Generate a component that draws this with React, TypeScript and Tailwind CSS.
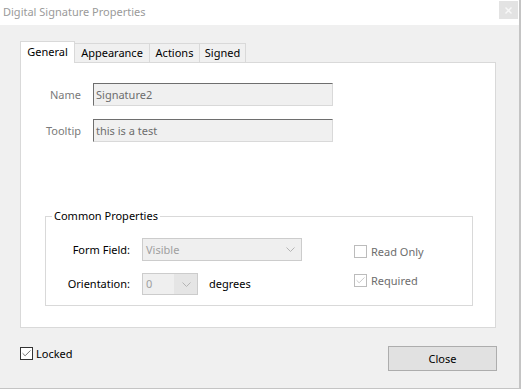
import { Check } from 'lucide-react';

const font = { fontFamily: '"Noto Sans", "Liberation Sans", sans-serif' };

function Chevron() {
  return (
    <svg width="9" height="5" viewBox="0 0 9 5" className="shrink-0">
      <path d="M0.5 0.5 L4.5 4.5 L8.5 0.5" fill="none" stroke="#b4b4b4" strokeWidth="1" />
    </svg>
  );
}

function Checkbox({ checked, disabled }: { checked?: boolean; disabled?: boolean }) {
  return (
    <span
      className={`w-[13px] h-[13px] shrink-0 flex items-center justify-center border bg-white ${
        disabled ? 'border-[#bcbcbc]' : 'border-[#333333]'
      }`}
    >
      {checked && <Check size={11} strokeWidth={1.5} className={disabled ? 'text-[#b0b0b0]' : 'text-[#333333]'} />}
    </span>
  );
}

function TextRow({ label, value }: { label: string; value: string }) {
  return (
    <div className="flex items-center">
      <span className="w-[60px] text-right text-[#7a7a7a]">{label}</span>
      <div className="ml-[12px] w-[240px] h-[23px] flex items-center pl-[2px] bg-[#f0f0f0] border border-t-[#6e6e6e] border-l-[#6e6e6e] border-r-[#d9d9d9] border-b-[#d9d9d9] text-[#6d6d6d]">
        {value}
      </div>
    </div>
  );
}

const TABS = [
  { label: 'General', w: 'w-[55px]' },
  { label: 'Appearance', w: 'w-[75px]' },
  { label: 'Actions', w: 'w-[50px]' },
  { label: 'Signed', w: 'w-[46px]' },
];

export default function App() {
  return (
    <div className="w-[523px] h-[390px] bg-white text-[11px] leading-4 text-black" style={font}>
      <div className="w-[521px] h-[389px] flex flex-col border-r-2 border-b border-[#c4c4c4]">
        <div className="h-[25px] shrink-0 bg-white flex items-center justify-between pl-[3px] pr-[1px]">
          <span className="text-[#9a9a9a] -mt-px">Digital Signature Properties</span>
          <span className="w-[19px] h-[18px] -mt-[5px] bg-[#e3e3e3] flex items-center justify-center">
            <svg width="7" height="7" viewBox="0 0 7 7">
              <path d="M0.5 0.5 L6.5 6.5 M6.5 0.5 L0.5 6.5" stroke="#f8f8f8" strokeWidth="1.4" />
            </svg>
          </span>
        </div>

        <div className="flex-1 bg-[#f0f0f0] pl-[20px] pt-[17px] flex flex-col">
          <div className="flex items-end h-[21px] relative z-10">
            {TABS.map((t, i) => (
              <div
                key={t.label}
                className={`${t.w} flex items-center justify-center ${
                  i === 0
                    ? 'h-[22px] bg-white border border-b-0 border-[#d9d9d9] pb-[2px]'
                    : 'h-[19px] border-t border-r border-[#d9d9d9] mb-[1px]'
                }`}
              >
                {t.label}
              </div>
            ))}
          </div>

          <div className="w-[476px] h-[266px] -mt-px bg-white border border-[#d9d9d9] pt-[20px] flex flex-col">
            <TextRow label="Name" value="Signature2" />
            <div className="mt-[13px]">
              <TextRow label="Tooltip" value="this is a test" />
            </div>

            <fieldset className="ml-[24px] mt-[66px] w-[428px] border border-[#d9d9d9] px-0 pb-[10px]">
              <legend className="ml-[6px] px-[2px] leading-4">Common Properties</legend>
              <div className="flex pt-[14px]">
                <div className="flex flex-col gap-[12px]">
                  <div className="flex items-center">
                    <span className="w-[84px] text-right">Form Field:</span>
                    <div className="ml-[12px] w-[160px] h-[23px] border border-[#cccccc] bg-[#efefef] flex items-center pl-[3px] pr-[6px] text-[#a0a0a0]">
                      <span className="flex-1">Visible</span>
                      <Chevron />
                    </div>
                  </div>
                  <div className="flex items-center">
                    <span className="w-[84px] text-right">Orientation:</span>
                    <div className="ml-[12px] w-[56px] h-[22px] border border-[#cccccc] bg-[#e5e5e5] flex items-center pr-[6px] text-[#a0a0a0]">
                      <span className="w-[31px] h-full bg-[#efefef] flex items-center pl-[3px]">0</span>
                      <span className="flex-1" />
                      <Chevron />
                    </div>
                    <span className="ml-[11px]">degrees</span>
                  </div>
                </div>

                <div className="ml-[52px] pt-[7px] flex flex-col gap-[16px] text-[#6d6d6d]">
                  <label className="flex items-center h-[13px] gap-[4px]">
                    <Checkbox disabled />
                    Read Only
                  </label>
                  <label className="flex items-center h-[13px] gap-[4px]">
                    <Checkbox checked disabled />
                    Required
                  </label>
                </div>
              </div>
            </fieldset>
          </div>

          <div className="flex items-start justify-between pr-[22px] mt-[18px]">
            <label className="flex items-center gap-[3px] mt-[1px] h-[13px]">
              <Checkbox checked />
              Locked
            </label>
            <button className="w-[109px] h-[25px] bg-[#e1e1e1] border border-[#adadad]">Close</button>
          </div>
        </div>
      </div>
    </div>
  );
}
